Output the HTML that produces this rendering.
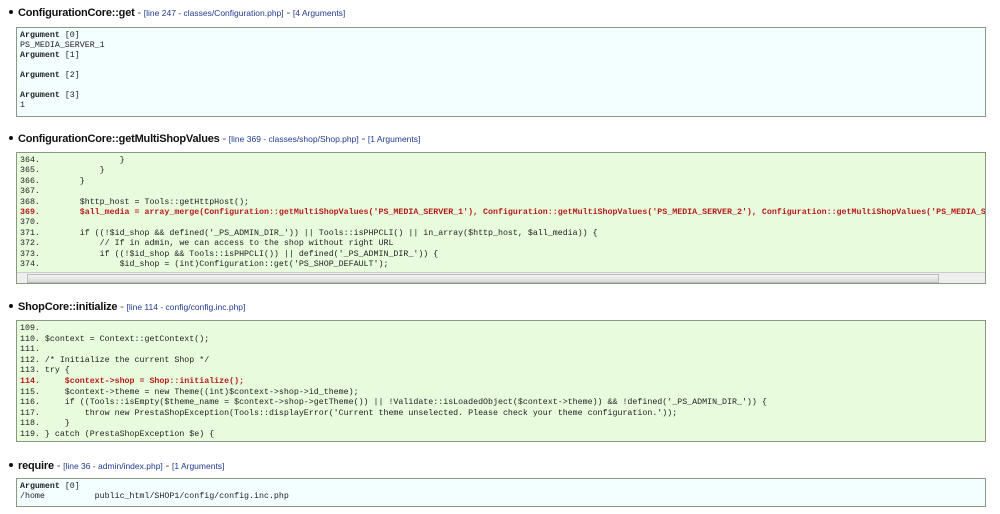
<!DOCTYPE html>
<html><head><meta charset="utf-8"><style>
body{margin:0;background:#fff;width:1000px;height:514px;overflow:hidden;position:relative;font-family:"Liberation Sans",sans-serif}
.h{position:absolute;left:8px;font-size:11px;font-weight:bold;color:#111;white-space:nowrap;letter-spacing:-0.2px}
.h .b{display:inline-block;width:4px;height:4px;border-radius:50%;background:#111;margin:0 5px 2px 1px}
.h .l{font-weight:normal;font-size:8.5px;color:#223a8f;letter-spacing:0}
.h .d{font-weight:normal;color:#444}
.box{position:absolute;left:16px;width:968px;border:1px solid #8a9a80;overflow:hidden}
.blue{background:#f2feff}
.green{background:#e8fcdd}
pre{margin:0;padding:3px 0 0 3px;font-family:"Liberation Mono",monospace;font-size:8.3px;color:#222;white-space:pre}
.r{color:#b51b1b;font-weight:bold}
.sb{position:absolute;left:0;right:0;bottom:0;height:10px;background:#eee;border-top:1px solid #ccc}
.th{position:absolute;left:10px;width:910px;top:1px;height:7px;background:linear-gradient(#f4f4f4,#d8d8d8);border:1px solid #bbb}
</style></head><body>

<div class="h" style="top:7px"><span class="b"></span>ConfigurationCore::get <span class="d">-</span> <span class="l">[line 247 - classes/Configuration.php]</span> <span class="d">-</span> <span class="l">[4 Arguments]</span></div>
<div class="box blue" style="top:27px;height:88px"><pre style="line-height:10px"><b>Argument</b> [0]
PS_MEDIA_SERVER_1
<b>Argument</b> [1]

<b>Argument</b> [2]

<b>Argument</b> [3]
1</pre></div>

<div class="h" style="top:133px"><span class="b"></span>ConfigurationCore::getMultiShopValues <span class="d">-</span> <span class="l">[line 369 - classes/shop/Shop.php]</span> <span class="d">-</span> <span class="l">[1 Arguments]</span></div>
<div class="box green" style="top:152px;height:130px"><pre style="line-height:10.4px">364.                }
365.            }
366.        }
367.
368.        $http_host = Tools::getHttpHost();
<span class="r">369.        $all_media = array_merge(Configuration::getMultiShopValues('PS_MEDIA_SERVER_1'), Configuration::getMultiShopValues('PS_MEDIA_SERVER_2'), Configuration::getMultiShopValues('PS_MEDIA_SERVER_3'));</span>
370.
371.        if ((!$id_shop &amp;&amp; defined('_PS_ADMIN_DIR_')) || Tools::isPHPCLI() || in_array($http_host, $all_media)) {
372.            // If in admin, we can access to the shop without right URL
373.            if ((!$id_shop &amp;&amp; Tools::isPHPCLI()) || defined('_PS_ADMIN_DIR_')) {
374.                $id_shop = (int)Configuration::get('PS_SHOP_DEFAULT');</pre>
<div class="sb"><div class="th"></div></div></div>

<div class="h" style="top:301px"><span class="b"></span>ShopCore::initialize <span class="d">-</span> <span class="l">[line 114 - config/config.inc.php]</span></div>
<div class="box green" style="top:320px;height:120px"><pre style="line-height:10.6px">109.
110. $context = Context::getContext();
111.
112. /* Initialize the current Shop */
113. try {
<span class="r">114.     $context->shop = Shop::initialize();</span>
115.     $context->theme = new Theme((int)$context->shop->id_theme);
116.     if ((Tools::isEmpty($theme_name = $context->shop->getTheme()) || !Validate::isLoadedObject($context->theme)) &amp;&amp; !defined('_PS_ADMIN_DIR_')) {
117.         throw new PrestaShopException(Tools::displayError('Current theme unselected. Please check your theme configuration.'));
118.     }
119. } catch (PrestaShopException $e) {</pre></div>

<div class="h" style="top:460px"><span class="b"></span>require <span class="d">-</span> <span class="l">[line 36 - admin/index.php]</span> <span class="d">-</span> <span class="l">[1 Arguments]</span></div>
<div class="box blue" style="top:478px;height:27px"><pre style="line-height:10px"><b>Argument</b> [0]
/home          public_html/SHOP1/config/config.inc.php</pre></div>

</body></html>
